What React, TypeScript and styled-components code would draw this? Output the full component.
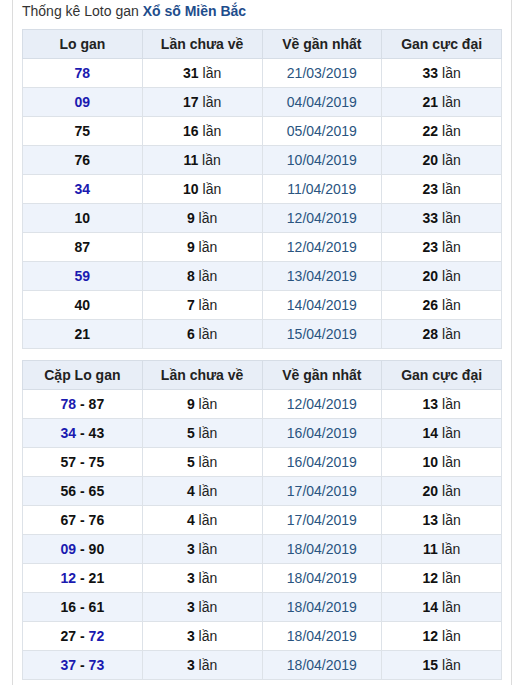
import styled, { createGlobalStyle } from 'styled-components';

const GlobalStyle = createGlobalStyle`
  body {
    margin: 0;
    background: #fff;
    font-family: Arial, "Liberation Sans", sans-serif;
    color: #222;
  }
`;

type Num = { v: string; blue?: boolean };

type Row = {
  nums: Num[];
  count: number;
  date: string;
  max: number;
};

const single: Row[] = [
  { nums: [{ v: '78', blue: true }], count: 31, date: '21/03/2019', max: 33 },
  { nums: [{ v: '09', blue: true }], count: 17, date: '04/04/2019', max: 21 },
  { nums: [{ v: '75' }], count: 16, date: '05/04/2019', max: 22 },
  { nums: [{ v: '76' }], count: 11, date: '10/04/2019', max: 20 },
  { nums: [{ v: '34', blue: true }], count: 10, date: '11/04/2019', max: 23 },
  { nums: [{ v: '10' }], count: 9, date: '12/04/2019', max: 33 },
  { nums: [{ v: '87' }], count: 9, date: '12/04/2019', max: 23 },
  { nums: [{ v: '59', blue: true }], count: 8, date: '13/04/2019', max: 20 },
  { nums: [{ v: '40' }], count: 7, date: '14/04/2019', max: 26 },
  { nums: [{ v: '21' }], count: 6, date: '15/04/2019', max: 28 },
];

const pairs: Row[] = [
  { nums: [{ v: '78', blue: true }, { v: '87' }], count: 9, date: '12/04/2019', max: 13 },
  { nums: [{ v: '34', blue: true }, { v: '43' }], count: 5, date: '16/04/2019', max: 14 },
  { nums: [{ v: '57' }, { v: '75' }], count: 5, date: '16/04/2019', max: 10 },
  { nums: [{ v: '56' }, { v: '65' }], count: 4, date: '17/04/2019', max: 20 },
  { nums: [{ v: '67' }, { v: '76' }], count: 4, date: '17/04/2019', max: 13 },
  { nums: [{ v: '09', blue: true }, { v: '90' }], count: 3, date: '18/04/2019', max: 11 },
  { nums: [{ v: '12', blue: true }, { v: '21' }], count: 3, date: '18/04/2019', max: 12 },
  { nums: [{ v: '16' }, { v: '61' }], count: 3, date: '18/04/2019', max: 14 },
  { nums: [{ v: '27' }, { v: '72', blue: true }], count: 3, date: '18/04/2019', max: 12 },
  { nums: [{ v: '37', blue: true }, { v: '73', blue: true }], count: 3, date: '18/04/2019', max: 15 },
];

function GanTable({ first, rows }: { first: string; rows: Row[] }) {
  return (
    <Table>
      <thead>
        <tr>
          <Th>{first}</Th>
          <Th>Lần chưa về</Th>
          <Th>Về gần nhất</Th>
          <Th>Gan cực đại</Th>
        </tr>
      </thead>
      <tbody>
        {rows.map((r, i) => (
          <Tr key={i} $alt={i % 2 === 1}>
            <Td>
              {r.nums.map((n, j) => (
                <span key={j}>
                  {j > 0 && <Strong> - </Strong>}
                  <Loto $blue={!!n.blue}>{n.v}</Loto>
                </span>
              ))}
            </Td>
            <Td>
              <Strong>{r.count}</Strong> lần
            </Td>
            <DateTd>{r.date}</DateTd>
            <Td>
              <Strong>{r.max}</Strong> lần
            </Td>
          </Tr>
        ))}
      </tbody>
    </Table>
  );
}

export default function App() {
  return (
    <>
      <GlobalStyle />
      <Panel>
        <Title>
          Thống kê Loto gan <TitleLink>Xổ số Miền Bắc</TitleLink>
        </Title>
        <GanTable first="Lo gan" rows={single} />
        <GanTable first="Cặp Lo gan" rows={pairs} />
      </Panel>
    </>
  );
}

const Panel = styled.div`
  margin-left: 12px;
  width: 480px;
  padding: 3px 9px 5px;
  border-left: 1px solid #dcdcdc;
  border-right: 1px solid #dcdcdc;
  display: flex;
  flex-direction: column;
  gap: 11px;
`;

const Title = styled.div`
  font-size: 14px;
  line-height: 16px;
  color: #333;
  margin-bottom: -1px;
`;

const TitleLink = styled.b`
  color: #1e4d8c;
`;

const Table = styled.table`
  width: 480px;
  border-collapse: collapse;
  table-layout: fixed;
  font-size: 14px;
`;

const Th = styled.th`
  height: 28px;
  padding: 0 4px;
  background: #e8eef7;
  border: 1px solid #d6dde6;
  font-weight: bold;
  color: #222;
  text-align: center;
`;

const Tr = styled.tr<{ $alt: boolean }>`
  background: ${({ $alt }) => ($alt ? '#eef3fb' : '#fff')};
`;

const Td = styled.td`
  height: 28px;
  padding: 0 4px;
  border: 1px solid #dde2e8;
  text-align: center;
  color: #222;
`;

const DateTd = styled(Td)`
  color: #2a5480;
`;

const Strong = styled.b`
  color: #111;
`;

const Loto = styled.b<{ $blue: boolean }>`
  color: ${({ $blue }) => ($blue ? '#1a1ab0' : '#111')};
`;
